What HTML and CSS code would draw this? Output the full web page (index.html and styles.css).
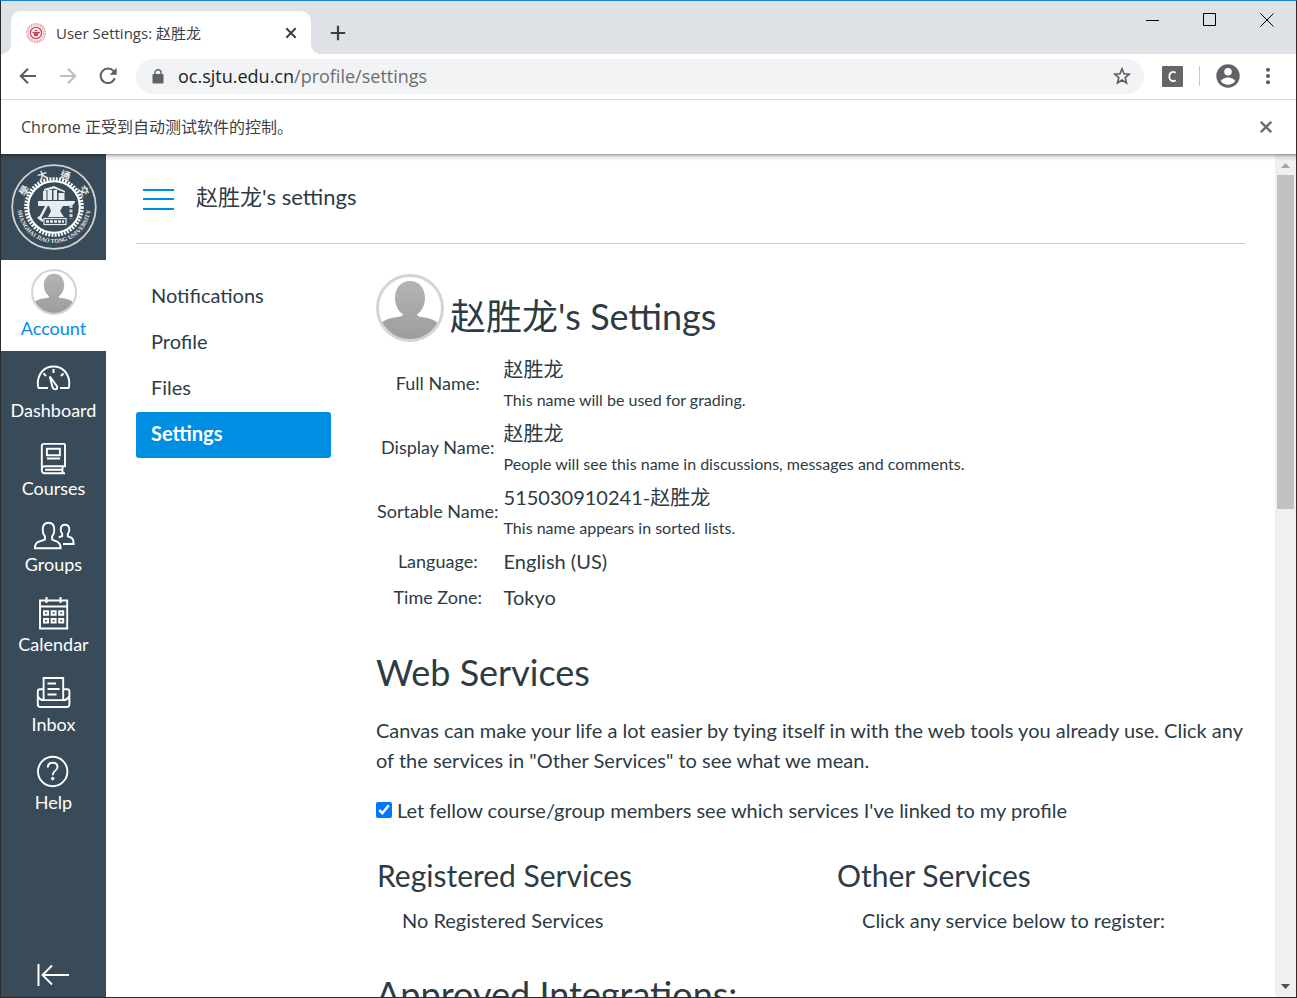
FILE: index.html
```html
<!DOCTYPE html>
<html lang="en">
<head>
<meta charset="utf-8">
<title>User Settings: 赵胜龙</title>
<link rel="stylesheet" href="styles.css">
</head>
<body>
<div class="window">
  <header class="tabstrip">
    <div class="tab">
      <svg class="favicon" width="20" height="20" viewBox="0 0 20 20" fill="none" stroke="#c8405a">
        <circle cx="10" cy="10" r="9.2" stroke-width="1.4" stroke-dasharray="1.8 .7" opacity=".5"/>
        <circle cx="10" cy="10" r="7.6" stroke-width="1.4" stroke-dasharray="2 1" opacity=".4"/>
        <circle cx="10" cy="10" r="5.6" stroke-width="1.3"/>
        <path d="M6.500 9.300h7.500l-2.500 1.500v2h-3v-2zM8.500 7.500h3" fill="#c8405a" stroke-width="1"/>
      </svg>
      <span class="tab-title">User Settings: 赵胜龙</span>
      <button class="icon-btn tab-close" aria-label="Close tab"><svg width="12" height="12" viewBox="0 0 12 12" stroke="#3c4043" stroke-width="2"><path d="M1.3 1.3l9.4 9.4M10.7 1.3l-9.4 9.4"/></svg></button>
    </div>
    <button class="icon-btn new-tab" aria-label="New tab"><svg width="16" height="16" viewBox="0 0 16 16" stroke="#3c4043" stroke-width="2.2"><path d="M8 .8v14.4M.8 8h14.4"/></svg></button>
    <div class="window-controls">
      <button class="icon-btn" aria-label="Minimize"><svg width="14" height="14" viewBox="0 0 14 14" stroke="#000"><path d="M0 7.5h13"/></svg></button>
      <button class="icon-btn" aria-label="Maximize"><svg width="14" height="14" viewBox="0 0 14 14" stroke="#000" fill="none"><path d="M.5 .5h12v12h-12z"/></svg></button>
      <button class="icon-btn" aria-label="Close"><svg width="14" height="14" viewBox="0 0 14 14" stroke="#000"><path d="M.5 .5l13 13M13.5 .5l-13 13"/></svg></button>
    </div>
  </header>

  <div class="toolbar">
    <button class="icon-btn" aria-label="Back"><svg width="18" height="18" viewBox="0 0 18 18" stroke="#5a5d61" stroke-width="2" fill="none"><path d="M17 9H2.5M9 1.8L1.8 9 9 16.2"/></svg></button>
    <button class="icon-btn" aria-label="Forward"><svg width="18" height="18" viewBox="0 0 18 18" stroke="#bcbec0" stroke-width="2" fill="none"><path d="M1 9h14.5M9 1.8L16.2 9 9 16.2"/></svg></button>
    <button class="icon-btn" aria-label="Reload"><svg width="18" height="18" viewBox="0 0 18 18" fill="none" stroke="#5a5d61" stroke-width="2"><path d="M15.8 11.2A7.3 7.3 0 1 1 14.6 4.2"/><path d="M17.6 .8v7h-7z" fill="#5a5d61" stroke="none"/></svg></button>
    <div class="omnibox">
      <svg width="12" height="15" viewBox="0 0 12 15"><rect x="0.5" y="5" width="11" height="9.6" rx="1.2" fill="#5f6368"/><path d="M3 5.5V3.8a3 3 0 0 1 6 0v1.7" fill="none" stroke="#5f6368" stroke-width="1.4"/></svg>
      <span class="url">oc.sjtu.edu.cn<span class="url-path">/profile/settings</span></span>
      <button class="icon-btn" aria-label="Bookmark"><svg width="18" height="18" viewBox="0 0 18 18" fill="none" stroke="#5a5d61" stroke-width="1.6"><path d="M9 1.800l2 5 5.300.4-4.100 3.400 1.300 5.300L9 13l-4.500 2.900 1.300-5.300-4.100-3.400L7 6.800z"/></svg></button>
    </div>
    <button class="icon-btn" aria-label="Extension"><svg width="21" height="21" viewBox="0 0 21 21"><rect width="21" height="21" rx="1" fill="#666"/><path d="M13.700 6.800C11 5 7.300 6.200 7.300 10.500S11 16 13.700 14.200" fill="none" stroke="#fff" stroke-width="1.700"/></svg></button>
    <span class="divider"></span>
    <button class="icon-btn account-btn" aria-label="Profile"><svg width="24" height="24" viewBox="0 0 24 24"><circle cx="12" cy="12" r="11.700" fill="#5f6368"/><circle cx="12" cy="7.800" r="3.800" fill="#fff"/><path d="M5 17.300c0-2.300 4.200-3.900 7-3.900s7 1.600 7 3.900c-1.600 2.200-4 3.500-7 3.500s-5.400-1.300-7-3.500z" fill="#fff"/></svg></button>
    <button class="icon-btn" aria-label="Menu"><svg width="4" height="18" viewBox="0 0 4 18" fill="#5a5d61"><circle cx="2" cy="2.700" r="2"/><circle cx="2" cy="9" r="2"/><circle cx="2" cy="15.300" r="2"/></svg></button>
  </div>

  <div class="infobar">
    <span>Chrome 正受到自动测试软件的控制。</span>
    <button class="icon-btn" aria-label="Dismiss"><svg width="12" height="12" viewBox="0 0 12 12" stroke="#6c6f73" stroke-width="2.400"><path d="M.8 .8l10.400 10.400M11.200 .8L.8 11.200"/></svg></button>
  </div>

  <div class="viewport">
    <nav class="global-nav" aria-label="Global">
      <a class="brand" href="#" aria-label="Shanghai Jiao Tong University">
        <svg width="88" height="88" viewBox="0 0 88 88">
          <defs><path id="ring" d="M8.500 35a36.500 36.500 0 1 0 71 0"/></defs>
          <circle cx="44" cy="44" r="41.800" fill="none" stroke="#ccd2d6" stroke-width="1.800"/>
          <circle cx="44" cy="44" r="28" fill="none" stroke="#fff" stroke-width="3.600" stroke-dasharray="1.900 1.280"/>
          <circle cx="44" cy="44" r="25.800" fill="none" stroke="#fff" stroke-width="2"/>
          <text class="seal-latin"><textPath href="#ring" startOffset="50%" text-anchor="middle">SHANGHAI JIAO TONG UNIVERSITY</textPath></text>
          <g class="seal-han">
            <text transform="translate(14 27.500) rotate(-58)" text-anchor="middle" y="4">學</text>
            <text transform="translate(32.500 12) rotate(-19)" text-anchor="middle" y="4">大</text>
            <text transform="translate(55.500 12) rotate(19)" text-anchor="middle" y="4">通</text>
            <text transform="translate(74 27.500) rotate(58)" text-anchor="middle" y="4">交</text>
          </g>
          <g fill="#e8ecee">
            <path d="M33 28h3.500v9H33zM37.500 27h4.500v10h-4.500zM43.500 27h3.500v10h-3.500zM48.500 30h6v7h-6zM34 26l10-3 11 5v1.500l-11-4-10 2.500z"/>
            <path d="M28 38h37c0 3-3 5-8 5h-4l-3 5 4 6H38l3-6-2-5H28z"/>
          </g>
          <path d="M37 42l-7.500 14M28 54l5 4" stroke="#e8ecee" stroke-width="2.500"/>
          <rect x="34" y="55.500" width="22" height="6" fill="none" stroke="#e8ecee" stroke-width="1.200"/>
          <path d="M36 58.500h18" stroke="#e8ecee" stroke-width="2.500" stroke-dasharray="3 1"/>
          <path d="M61 42v14" stroke="#ccd2d6" stroke-width="3" stroke-dasharray="3 1.500"/>
        </svg>
      </a>
      <a class="nav-item active" href="#">
        <svg width="46" height="46" viewBox="0 0 68 68"><use href="#person"/></svg>
        <span>Account</span>
      </a>
      <a class="nav-item" href="#">
        <svg width="45" height="38" viewBox="0 0 45 38" class="line"><path d="M17 27H7.500c-.6-2-.7-3-.7-4.500C6.800 12.500 13.500 5.500 22.500 5.500s15.800 7 15.800 17c0 1.500-.1 2.500-.7 4.500H29"/><path d="M22.500 8v4M12.500 12.500l2.600 2.400M32.500 12.500l-2.600 2.400" stroke-width="2"/><path d="M18.800 15.500l7 9.500c1 1.700.2 3.300-1.300 3.300s-2.700-.8-3-2.300z"/></svg>
        <span>Dashboard</span>
      </a>
      <a class="nav-item" href="#">
        <svg width="45" height="34" viewBox="0 0 45 34" class="line"><path d="M34 .9H13c-1.500 0-2.200 1-2.200 2.300V27c0 2 1 3.200 2.800 3.200H34M34 .9v22.300H14c-2 0-3.200 1-3.200 3M14 26.700h17.500M31.500 23.500v6.500M15.900 5.700h13v6.600h-13zM16 15.500h13"/></svg>
        <span>Courses</span>
      </a>
      <a class="nav-item" href="#">
        <svg width="45" height="32" viewBox="0 0 45 32" class="line"><path d="M3.900 27.200h25.700c0-4-1-5.700-4-6.900l-4.500-1.700v-3.200c1.500-1.500 2.200-3.600 2.200-6.600 0-4.500-2-7-5.800-7s-5.800 2.500-5.800 7c0 3 .7 5.100 2.200 6.600v3.200l-6 2.100c-3 1.100-4 2.500-4 6.500z"/><path d="M27.700 16.300l3.500-1.300v-2.300c-1-1.200-1.500-2.600-1.500-4.300 0-3 1.500-4.700 4.300-4.700s4.300 1.700 4.300 4.700c0 1.700-.5 3.100-1.500 4.300v2.600l3.200 1.200c2 .8 2.600 2.500 2.600 6.500H32"/></svg>
        <span>Groups</span>
      </a>
      <a class="nav-item" href="#">
        <svg width="45" height="36" viewBox="0 0 45 36" class="line"><path d="M9 3.500h27.200v28H9zM9 9.500h27.200"/><path d="M15.500 0v6M29.500 0v6" stroke-width="2"/><path d="M13 14.300h4v3.400h-4zM20.600 14.300h4v3.400h-4zM28.200 14.300h4v3.400h-4zM13 22h4v3.400h-4zM20.600 22h4v3.400h-4zM28.200 22h4v3.400h-4z" stroke-width="2"/></svg>
        <span>Calendar</span>
      </a>
      <a class="nav-item" href="#">
        <svg width="45" height="36" viewBox="0 0 45 36" class="line"><path d="M12.600 22.800V1h19.600v21.800M12 12.200H9c-1.500 0-2.200.8-2.200 2.200v12.800c0 1.800 1 2.800 2.800 2.800h26c1.800 0 2.800-1 2.800-2.800V14.400c0-1.400-.7-2.200-2.200-2.200H33M7 19.500c1 2.200 2.500 3.600 5.600 3.600h19.800c3 0 4.600-1.400 5.600-3.600M16.500 6.500h8.500M16.500 12h12M16.500 17.500h9"/></svg>
        <span>Inbox</span>
      </a>
      <a class="nav-item" href="#">
        <svg width="45" height="34" viewBox="0 0 45 34" class="line"><circle cx="21.700" cy="14.500" r="14.700"/><path d="M16.800 10.500c0-3 2-4.800 4.900-4.800 2.800 0 4.800 1.700 4.800 4.300 0 3.700-4.700 4-4.700 7.500v.8"/><circle cx="21.700" cy="21.600" r="1.300" fill="#fff" stroke-width="1"/></svg>
        <span>Help</span>
      </a>
      <button class="icon-btn collapse" aria-label="Minimize global navigation"><svg width="34" height="24" viewBox="0 0 34 24" class="line"><path d="M1.500 1v22" stroke-width="2"/><path d="M32 12H5M15 2.500L5.500 12l9.500 9.500"/></svg></button>
    </nav>

    <main class="page">
      <div class="crumbs">
        <button class="icon-btn" aria-label="Toggle menu"><svg width="31" height="26" viewBox="0 0 31 26" stroke="#008ee2" stroke-width="2"><path d="M0 6h31M0 15h31M0 25h31"/></svg></button>
        <span>赵胜龙's settings</span>
      </div>
      <div class="columns">
        <nav class="section-nav" aria-label="Account">
          <a href="#">Notifications</a>
          <a href="#">Profile</a>
          <a href="#">Files</a>
          <a class="current" href="#">Settings</a>
        </nav>
        <div class="content">
          <div class="profile-title">
            <svg width="68" height="68" viewBox="0 0 68 68">
              <defs>
                <linearGradient id="shade" x1="0" y1="0" x2="0" y2="1"><stop offset="0" stop-color="#b4b4b4"/><stop offset="1" stop-color="#9c9c9c"/></linearGradient>
                <clipPath id="disc"><circle cx="34" cy="34" r="32"/></clipPath>
                <g id="person"><circle cx="34" cy="34" r="32" fill="#fff"/><g clip-path="url(#disc)"><path d="M34 7c9 0 15 7 15 17 0 7-3 13-8 16.500 0 1.500 2 2.200 6 2.700 8 1 13 3 18 9V68H2V52.200c5-6 10-8 18-9 4-.5 7-1.200 7-2.700-5-3.500-8-9.500-8-16.500C19 14 25 7 34 7z" fill="url(#shade)"/></g><circle cx="34" cy="34" r="32.500" fill="none" stroke="#ced6d8" stroke-width="3"/></g>
              </defs>
              <use href="#person"/>
            </svg>
            <h1>赵胜龙's Settings</h1>
          </div>
          <table class="details">
            <tr><th scope="row">Full Name:</th><td>赵胜龙<small>This name will be used for grading.</small></td></tr>
            <tr><th scope="row">Display Name:</th><td>赵胜龙<small>People will see this name in discussions, messages and comments.</small></td></tr>
            <tr><th scope="row">Sortable Name:</th><td>515030910241-赵胜龙<small>This name appears in sorted lists.</small></td></tr>
            <tr><th scope="row">Language:</th><td>English (US)</td></tr>
            <tr><th scope="row">Time Zone:</th><td>Tokyo</td></tr>
          </table>
          <h2>Web Services</h2>
          <p>Canvas can make your life a lot easier by tying itself in with the web tools you already use. Click any of the services in "Other Services" to see what we mean.</p>
          <label class="check"><input type="checkbox" checked><span>Let fellow course/group members see which services I've linked to my profile</span></label>
          <div class="services">
            <section><h3>Registered Services</h3><div class="note">No Registered Services</div></section>
            <section><h3>Other Services</h3><div class="note">Click any service below to register:</div></section>
          </div>
          <h2>Approved Integrations:</h2>
        </div>
      </div>
    </main>

    <div class="scrollbar" aria-hidden="true">
      <svg width="21" height="21" viewBox="0 0 21 21" fill="#a3a3a3"><path d="M6 14l4.500-5 4.500 5z"/></svg>
      <div class="track"><div class="thumb"></div></div>
      <svg width="21" height="21" viewBox="0 0 21 21" fill="#505050"><path d="M6 8l4.500 5L15 8z"/></svg>
    </div>
  </div>
</div>
</body>
</html>
```
FILE: styles.css
```css
* { box-sizing: border-box; }
body {
  margin: 0;
  color: #2d3b45;
  font: 20px/30px Lato, "Noto Sans CJK SC", sans-serif;
}
svg { display: block; flex: none; }
a { color: inherit; text-decoration: none; }
h1, h2, h3, p { margin: 0; font-weight: 400; }

.window {
  display: flex;
  flex-direction: column;
  height: 100vh;
  overflow: hidden;
  border: 1px solid #2b2b2b;
  border-top-color: #1883d7;
  background: #fff;
}
.icon-btn {
  display: flex;
  align-items: center;
  justify-content: center;
  flex: none;
  padding: 0;
  border: 0;
  background: none;
}

/* Browser chrome */
.tabstrip, .toolbar, .infobar {
  display: flex;
  align-items: center;
  flex: none;
  font-family: "Open Sans", "Noto Sans CJK SC", sans-serif;
}
.tabstrip {
  height: 53px;
  padding-left: 10px;
  background: #dee1e6;
}
.tab {
  position: relative;
  display: flex;
  align-items: center;
  align-self: flex-end;
  width: 300px;
  height: 43px;
  padding: 0 14px 0 15px;
  border-radius: 10px 10px 0 0;
  background: #fff;
}
.tab::before, .tab::after {
  content: "";
  position: absolute;
  bottom: 0;
  width: 10px;
  height: 10px;
}
.tab::before { right: 100%; background: radial-gradient(circle at 0 0, #dee1e6 10px, #fff 10px); }
.tab::after { left: 100%; background: radial-gradient(circle at 100% 0, #dee1e6 10px, #fff 10px); }
.tab-title {
  flex: 1;
  margin-left: 10px;
  color: #3c4043;
  font-size: 15px;
  line-height: 20px;
}
.new-tab { margin: 10px 0 0 19px; }
.window-controls {
  display: flex;
  gap: 43px;
  align-self: flex-start;
  margin-left: auto;
  padding: 12px 22px 0 0;
}
.toolbar {
  gap: 22px;
  height: 46px;
  padding: 0 26px 1px 18px;
  border-bottom: 1px solid #dadce0;
}
.omnibox {
  display: flex;
  align-items: center;
  flex: 1;
  height: 35px;
  margin: 0 -4px 0 -3px;
  padding: 0 13px 0 16px;
  border-radius: 18px;
  background: #f1f3f4;
}
.url {
  flex: 1;
  margin-left: 14px;
  color: #202124;
  font-size: 18px;
}
.url-path { color: #6b6e72; }
.divider {
  width: 1px;
  height: 20px;
  margin: 0 -6px;
  background: #c8cacd;
}
.account-btn { margin-right: 4px; }
.infobar {
  justify-content: space-between;
  height: 54px;
  padding: 0 24px 0 20px;
  color: #3c4043;
  font-size: 16px;
}

/* Page frame */
.viewport {
  position: relative;
  display: flex;
  flex: 1;
  min-height: 0;
}
.viewport::before {
  content: "";
  position: absolute;
  inset: 0 0 auto;
  height: 7px;
  background: linear-gradient(rgba(0, 0, 0, .38), rgba(0, 0, 0, .1) 40%, transparent);
}
.global-nav {
  display: flex;
  flex-direction: column;
  flex: none;
  width: 105px;
  background: #394b58;
  color: #fff;
  font-size: 18px;
  line-height: 22px;
}
.brand {
  display: flex;
  justify-content: center;
  padding: 9px 0;
}
.seal-latin { fill: #e8ecee; font: 700 6px "Liberation Serif", serif; }
.seal-han { fill: #e8ecee; font: 700 10px "Noto Sans CJK TC", sans-serif; }
.nav-item {
  display: flex;
  flex-direction: column;
  align-items: center;
  padding: 10px 0 12px;
}
.nav-item.active {
  gap: 2px;
  padding-top: 9px;
  background: #fff;
  color: #008ee2;
}
.line {
  fill: none;
  stroke: #fff;
  stroke-width: 1.9;
  overflow: visible;
}
.collapse { margin: auto 0 10px; }

.page {
  flex: 1;
  min-width: 0;
  padding: 0 30px;
  overflow: hidden;
}
.crumbs {
  display: flex;
  align-items: center;
  gap: 22px;
  height: 90px;
  padding: 0 0 4px 7px;
  border-bottom: 1px solid #c7cdd1;
  font-size: 22px;
}
.columns {
  display: flex;
  gap: 45px;
  padding-top: 30px;
}
.section-nav {
  flex: none;
  width: 195px;
}
.section-nav a {
  display: block;
  padding: 6px 15px 10px;
  border-radius: 3px;
}
.section-nav .current {
  background: #008ee2;
  color: #fff;
  font-weight: 700;
}
.content {
  flex: 1;
  min-width: 0;
}
.profile-title {
  display: flex;
  align-items: center;
  gap: 6px;
}
h1, h2 {
  font-size: 36px;
  line-height: 48px;
}
h1 { padding-top: 16px; }
.details {
  margin-top: 9px;
  border-spacing: 0;
}
.details th, .details td {
  padding: 3px 1px;
  text-align: left;
}
.details th {
  padding-right: 4px;
  font-size: 18px;
  font-weight: 400;
  text-align: center;
}
.details small {
  display: block;
  padding-top: 4px;
  font-size: 16px;
  line-height: 24px;
}
h2 { margin: 33px 0 19px; }
.check {
  display: flex;
  align-items: center;
  gap: 5px;
  margin: 20px 0 31px;
}
.check input {
  width: 16px;
  height: 16px;
  margin: 0;
  accent-color: #0075ff;
}
.services {
  display: grid;
  grid-template-columns: 53fr 47fr;
  margin-bottom: 35px;
  padding-left: 1px;
}
h3 {
  margin-bottom: 11px;
  font-size: 30px;
  line-height: 38px;
}
.note { padding-left: 25px; }

.scrollbar {
  display: flex;
  flex-direction: column;
  flex: none;
  width: 21px;
  background: #f0f0f0;
}
.track {
  flex: 1;
  padding: 0 2px;
}
.thumb {
  height: 41.7%;
  background: #c1c1c1;
}
```
